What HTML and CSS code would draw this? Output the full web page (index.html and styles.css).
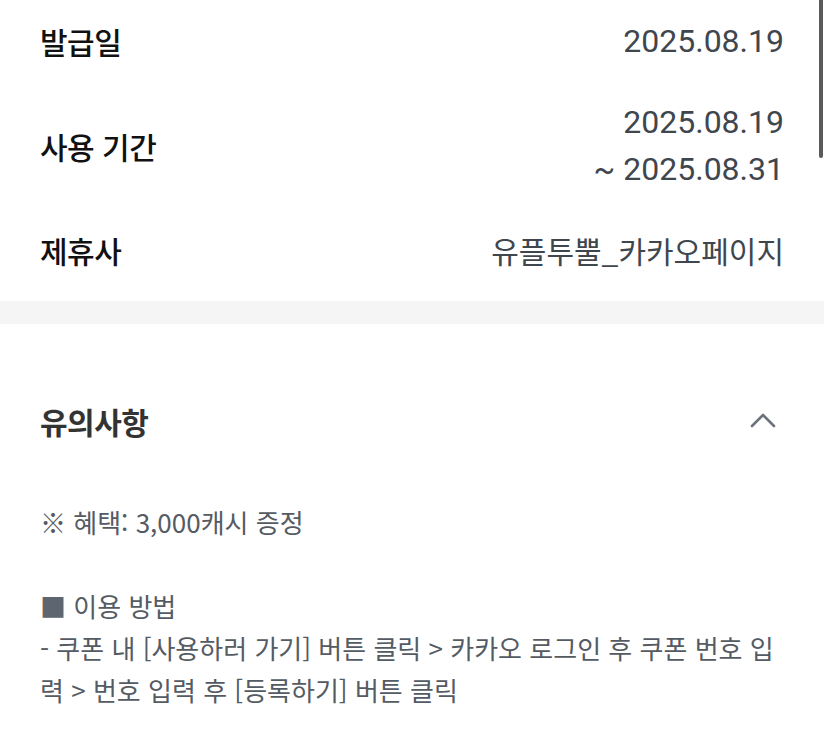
FILE: index.html
```html
<!DOCTYPE html>
<html lang="ko">
<head>
<meta charset="utf-8">
<link rel="stylesheet" href="styles.css">
</head>
<body>
<div class="page">
  <section class="info">
    <div class="row">
      <div class="label">발급일</div>
      <div class="value num">2025.08.19</div>
    </div>
    <div class="row">
      <div class="label">사용 기간</div>
      <div class="value num">2025.08.19<br>~ 2025.08.31</div>
    </div>
    <div class="row">
      <div class="label">제휴사</div>
      <div class="value kr">유플투뿔_카카오페이지</div>
    </div>
  </section>
  <div class="divider"></div>
  <section class="notice">
    <div class="notice-head">
      <h2 class="notice-title">유의사항</h2>
      <svg class="chevron" width="26" height="16" viewBox="0 0 26 16"><path d="M2 14 L13 3 L24 14" fill="none" stroke="#6b737c" stroke-width="2.6" stroke-linecap="round" stroke-linejoin="round"/></svg>
    </div>
    <div class="notice-body">
      <p>※ 혜택: 3,000캐시 증정</p>
      <p class="blank">&nbsp;</p>
      <p><span class="sq">■</span> 이용 방법</p>
      <p>- 쿠폰 내 [사용하러 가기] 버튼 클릭 &gt; 카카오 로그인 후 쿠폰 번호 입력 &gt; 번호 입력 후 [등록하기] 버튼 클릭</p>
    </div>
  </section>
  <div class="scrollbar"></div>
</div>
</body>
</html>
```

FILE: styles.css
```css
html, body {
  margin: 0;
  padding: 0;
  background: #ffffff;
}
body {
  font-family: Roboto, "Noto Sans CJK KR", sans-serif;
}
.page {
  width: 824px;
  min-height: 750px;
  overflow: hidden;
}
.info {
  display: flex;
  flex-direction: column;
  gap: 34px;
  padding: 18px 40px 27px 40px;
}
.row {
  display: flex;
  justify-content: space-between;
  align-items: center;
}
.label {
  font-family: "Noto Sans CJK KR", sans-serif;
  font-size: 30px;
  letter-spacing: -0.5px;
  line-height: 47px;
  color: #111111;
  font-weight: 500;
}
.value {
  text-align: right;
  color: #40464e;
  line-height: 47px;
}
.value.num {
  font-family: Roboto, "Noto Sans CJK KR", sans-serif;
  font-size: 32px;
}
.value.kr {
  font-family: "Noto Sans CJK KR", sans-serif;
  font-size: 30px;
  letter-spacing: 0;
}
.divider {
  height: 23px;
  background: #f5f5f5;
}
.notice {
  padding: 77px 40px 0 40px;
}
.notice-head {
  display: flex;
  justify-content: space-between;
  align-items: center;
  height: 40px;
}
.notice-title {
  margin: 0;
  font-family: "Noto Sans CJK KR", sans-serif;
  font-size: 30px;
  letter-spacing: -0.5px;
  font-weight: 700;
  color: #333333;
  line-height: 40px;
}
.chevron {
  margin-right: 8px;
  margin-top: -2px;
}
.notice-body {
  margin-top: 60px;
  font-family: "Noto Sans CJK KR", sans-serif;
  font-size: 26px;
  line-height: 42px;
  color: #555b63;
}
.notice-body p {
  margin: 0;
}
.sq {
  color: #5d6670;
}
.scrollbar {
  position: fixed;
  top: 0;
  right: 1px;
  width: 4px;
  height: 158px;
  background: #5a5a5a;
  border-radius: 0 0 3px 3px;
}
```
